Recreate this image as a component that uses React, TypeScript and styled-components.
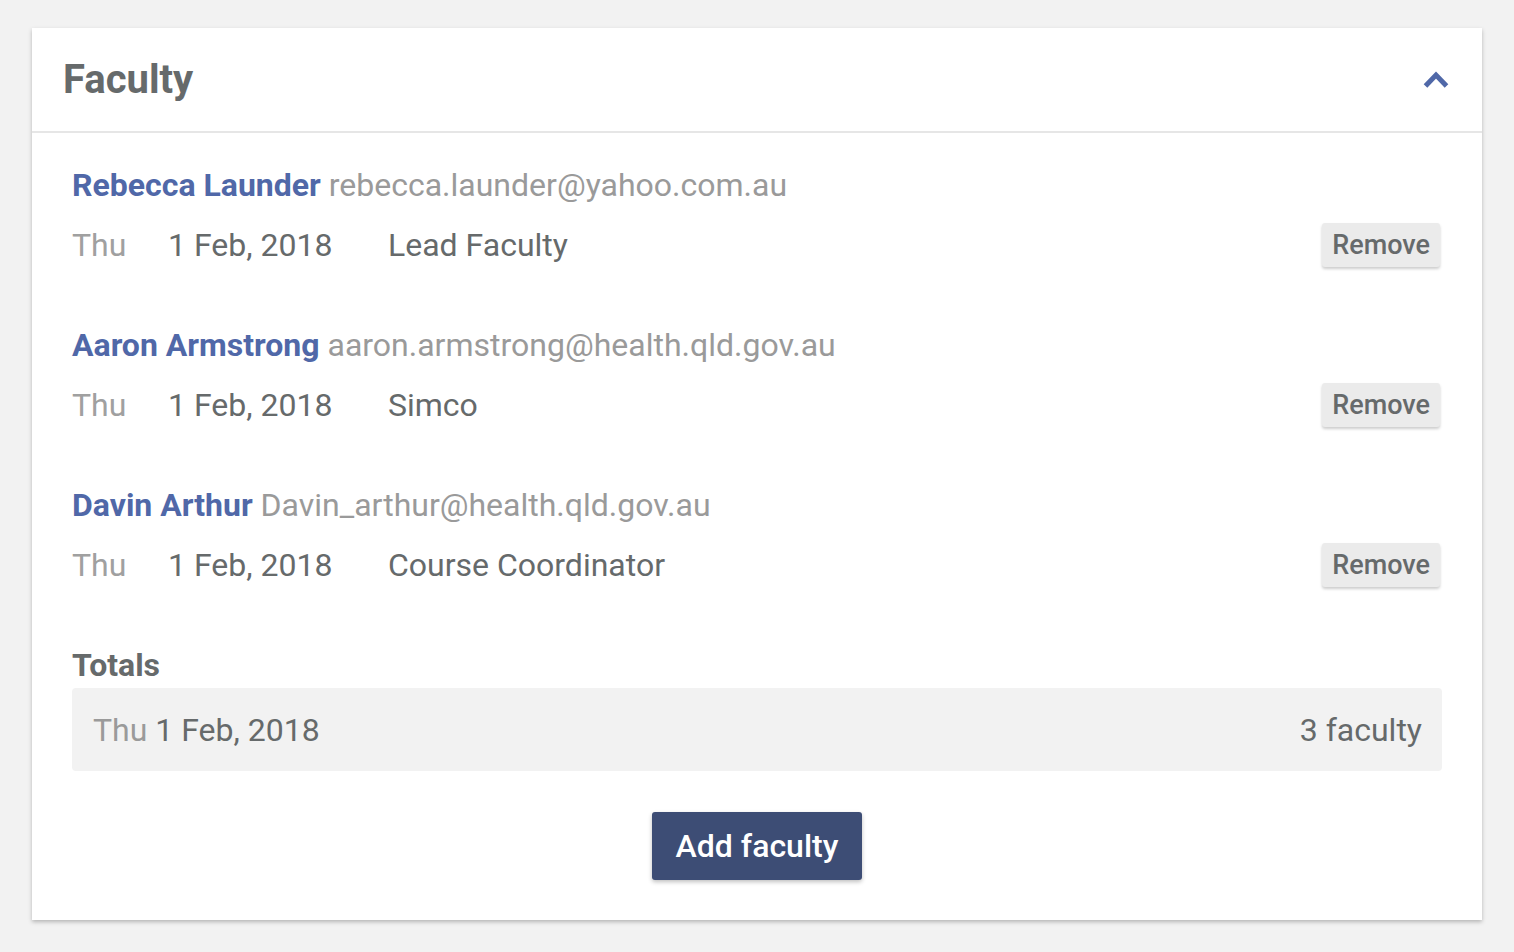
import styled, { createGlobalStyle } from "styled-components";

const GlobalStyle = createGlobalStyle`
  html, body {
    margin: 0;
    padding: 0;
    background: #f2f2f2;
    font-family: Roboto, "Liberation Sans", sans-serif;
  }
`;

const Page = styled.div`
  padding: 28px 32px 32px;
`;

const Card = styled.section`
  background: #fff;
  box-shadow: 0 2px 4px rgba(0, 0, 0, 0.25);
`;

const Header = styled.header`
  height: 103px;
  display: flex;
  align-items: center;
  justify-content: space-between;
  padding: 0 29px 0 31px;
  border-bottom: 2px solid #e6e6e6;
`;

const Title = styled.h2`
  margin: 0;
  font-size: 40px;
  font-weight: 700;
  color: #666a6b;
`;

const Toggle = styled.button`
  border: none;
  background: none;
  padding: 0;
  width: 32px;
  height: 32px;
  display: flex;
  align-items: center;
  justify-content: center;
  cursor: pointer;
`;

const Body = styled.div`
  padding: 32px 40px 40px;
`;

const Entry = styled.div`
  margin-bottom: 58px;
`;

const NameLine = styled.div`
  line-height: 40px;
  font-size: 32px;
  white-space: nowrap;
`;

const Name = styled.span`
  font-weight: 700;
  color: #5068a8;
`;

const Email = styled.span`
  color: #9a9a9a;
`;

const DetailRow = styled.div`
  margin-top: 18px;
  height: 44px;
  display: flex;
  align-items: center;
  font-size: 32px;
  color: #666a6b;
`;

const Day = styled.span`
  width: 96px;
  color: #a0a0a0;
`;

const DateText = styled.span`
  width: 220px;
`;

const Role = styled.span`
  flex: 1;
`;

const RemoveButton = styled.button`
  height: 44px;
  padding: 0 10px;
  border: none;
  border-radius: 3px;
  background: #ebebeb;
  color: #666a6b;
  font-family: inherit;
  font-size: 27px;
  font-weight: 500;
  box-shadow: 0 2px 3px rgba(0, 0, 0, 0.2);
  margin-right: 2px;
  cursor: pointer;
`;

const TotalsLabel = styled.div`
  line-height: 40px;
  font-size: 32px;
  font-weight: 700;
  color: #666a6b;
`;

const TotalsBox = styled.div`
  margin-top: 3px;
  height: 83px;
  padding: 0 20px 0 21px;
  display: flex;
  align-items: center;
  justify-content: space-between;
  background: #f2f2f2;
  border-radius: 4px;
  font-size: 32px;
  color: #666a6b;
`;

const Actions = styled.div`
  margin-top: 41px;
  display: flex;
  justify-content: center;
`;

const AddButton = styled.button`
  height: 68px;
  padding: 0 24px;
  border: none;
  border-radius: 3px;
  background: #3d4d75;
  color: #fff;
  font-family: inherit;
  font-size: 32px;
  font-weight: 500;
  box-shadow: 0 2px 4px rgba(0, 0, 0, 0.25);
  cursor: pointer;
`;

interface Faculty {
  name: string;
  email: string;
  day: string;
  date: string;
  role: string;
}

const faculty: Faculty[] = [
  {
    name: "Rebecca Launder",
    email: "rebecca.launder@yahoo.com.au",
    day: "Thu",
    date: "1 Feb, 2018",
    role: "Lead Faculty",
  },
  {
    name: "Aaron Armstrong",
    email: "aaron.armstrong@health.qld.gov.au",
    day: "Thu",
    date: "1 Feb, 2018",
    role: "Simco",
  },
  {
    name: "Davin Arthur",
    email: "Davin_arthur@health.qld.gov.au",
    day: "Thu",
    date: "1 Feb, 2018",
    role: "Course Coordinator",
  },
];

const App = () => {
  return (
    <>
      <GlobalStyle />
      <Page>
        <Card>
          <Header>
            <Title>Faculty</Title>
            <Toggle aria-label="Collapse">
              <svg width="32" height="24" viewBox="0 0 32 24">
                <polyline
                  points="4.5,18 15,7 25.5,18"
                  fill="none"
                  stroke="#5068a8"
                  strokeWidth="5"
                />
              </svg>
            </Toggle>
          </Header>
          <Body>
            {faculty.map((f) => (
              <Entry key={f.email}>
                <NameLine>
                  <Name>{f.name}</Name> <Email>{f.email}</Email>
                </NameLine>
                <DetailRow>
                  <Day>{f.day}</Day>
                  <DateText>{f.date}</DateText>
                  <Role>{f.role}</Role>
                  <RemoveButton>Remove</RemoveButton>
                </DetailRow>
              </Entry>
            ))}
            <TotalsLabel>Totals</TotalsLabel>
            <TotalsBox>
              <span>
                <Email>Thu</Email> 1 Feb, 2018
              </span>
              <span>{faculty.length} faculty</span>
            </TotalsBox>
            <Actions>
              <AddButton>Add faculty</AddButton>
            </Actions>
          </Body>
        </Card>
      </Page>
    </>
  );
};

export default App;
